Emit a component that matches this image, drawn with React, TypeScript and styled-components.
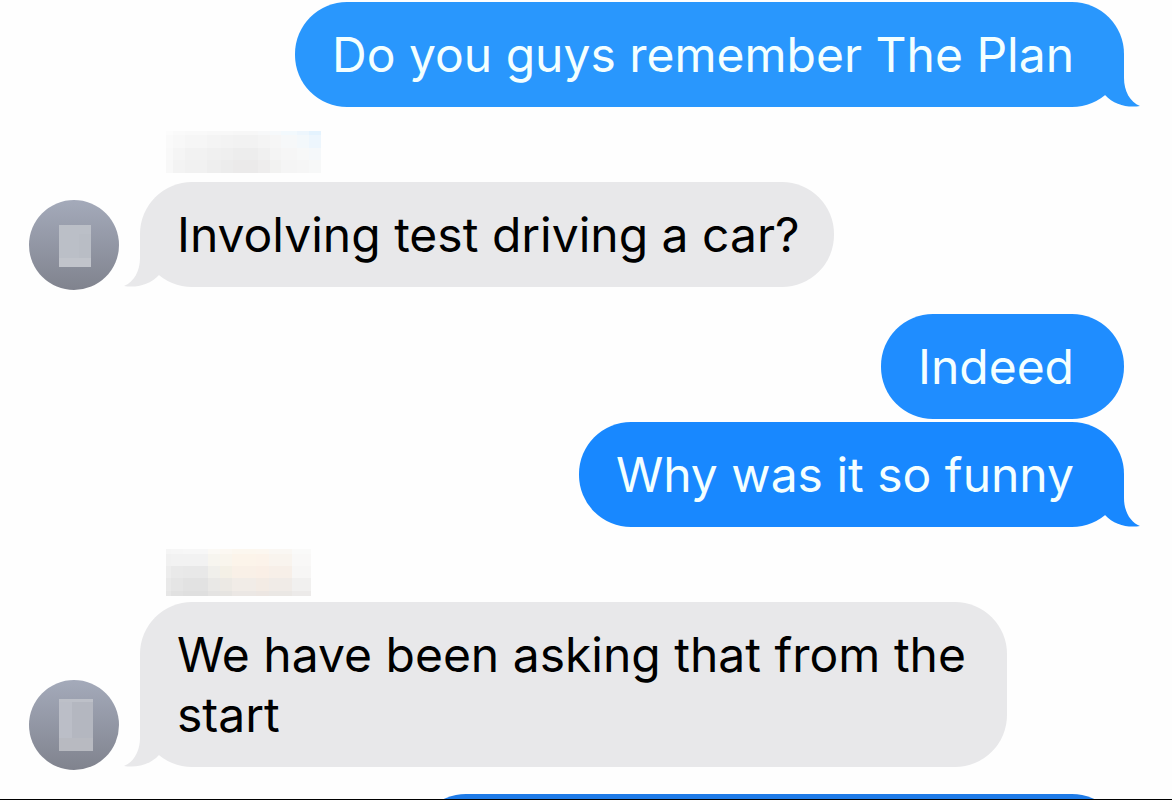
import React from "react";
import styled, { createGlobalStyle } from "styled-components";

const GlobalStyle = createGlobalStyle`
  * { box-sizing: border-box; }
  body { margin: 0; background: #fefefe; }
`;

const Thread = styled.main`
  display: flex;
  flex-direction: column;
  height: 100vh;
  padding-top: 2px;
  overflow: hidden;
  border-bottom: 1px solid #000;
  background: #fefefe;
  font-family: Inter, "Liberation Sans", sans-serif;
  font-size: 48px;
  line-height: 60px;
`;

const SentGroup = styled.section<{ $before?: number }>`
  display: flex;
  flex-direction: column;
  flex-shrink: 0;
  align-items: flex-end;
  gap: 3px;
  margin-top: ${(p) => p.$before ?? 0}px;
  padding: 0 48px;
`;

const ReceivedGroup = styled.section<{ $before: number }>`
  display: flex;
  flex-shrink: 0;
  align-items: flex-end;
  gap: 21px;
  margin-top: ${(p) => p.$before}px;
  padding: 0 165px 0 29px;
`;

const Stack = styled.div<{ $gap: number }>`
  display: flex;
  flex-direction: column;
  align-items: flex-start;
  gap: ${(p) => p.$gap}px;
  padding-bottom: 3px;
`;

const Bubble = styled.div<{ $fill: string; $sent?: boolean }>`
  position: relative;
  min-height: 105px;
  padding: ${(p) => (p.$sent ? "23px 50px 22px 37px" : "23px 34px 22px 37px")};
  border-radius: 52px;
  background: ${(p) => p.$fill};
  color: ${(p) => (p.$sent ? "#f4ffff" : "#000")};
`;

const NextBubble = styled(Bubble)`
  width: 66%;
`;

const Text = styled.p`
  margin: 0;
`;

const TailShape = styled.svg<{ $sent?: boolean }>`
  position: absolute;
  bottom: 0;
  ${(p) => (p.$sent ? "right: -16px;" : "left: -16px; transform: scaleX(-1);")}
`;

const NameBlur = styled.svg`
  display: block;
  margin-left: 26px;
`;

const AvatarDisc = styled.div`
  display: flex;
  flex-shrink: 0;
  align-items: center;
  justify-content: center;
  width: 90px;
  height: 90px;
  border-radius: 50%;
  background: linear-gradient(#a4aaba, #80838e);
`;

function Tail({ fill, sent }: { fill: string; sent?: boolean }) {
  return (
    <TailShape $sent={sent} width="40" height="52" viewBox="0 0 40 52" aria-hidden="true">
      <path d="M24 0V23C24 36 30 47 40 51C28 53 14 50 5 40V0Z" fill={fill} />
    </TailShape>
  );
}

function Mosaic({ rows, cols, heights }: { rows: string[][]; cols: number[]; heights: number[] }) {
  const sum = (list: number[], end: number) => list.slice(0, end).reduce((a, b) => a + b, 0);
  const width = sum(cols, cols.length);
  const height = sum(heights, heights.length);
  return (
    <NameBlur width={width} height={height} shapeRendering="crispEdges" aria-hidden="true">
      {rows.map((row, r) =>
        row.map((fill, c) => (
          <rect key={`${r}-${c}`} x={sum(cols, c)} y={sum(heights, r)} width={cols[c]} height={heights[r]} fill={fill} />
        ))
      )}
    </NameBlur>
  );
}

const firstName = {
  cols: [7, 12, 22, 14, 12, 25, 12, 11, 16, 12, 12],
  heights: [4, 13, 12, 13],
  rows: [
    ["#fcfcfc", "#fafafa", "#f9f9f9", "#f8f8f8", "#f8f8f8", "#f7f7f7", "#f7f8f9", "#f6f9fb", "#f2f9fd", "#edf6fd", "#e4f3fe"],
    ["#fafafa", "#f8f8f8", "#f6f6f6", "#f4f4f4", "#f3f3f3", "#f2f2f2", "#f4f4f4", "#f6f6f6", "#f6f8f9", "#f3f8fb", "#edf6fd"],
    ["#f9f9f9", "#f5f5f5", "#f2f2f2", "#f0f0f0", "#efefef", "#ededed", "#f0f0f0", "#f4f4f4", "#f6f6f6", "#f7f8f8", "#f5f8fa"],
    ["#f8f8f8", "#f3f3f3", "#f1f1f1", "#eeeeee", "#ececec", "#ebeaea", "#eeeded", "#f2f2f1", "#f5f5f5", "#f6f6f6", "#f7f8f8"],
  ],
};

const secondName = {
  cols: [5, 12, 25, 12, 12, 24, 13, 23, 19],
  heights: [5, 12, 12, 13, 5],
  rows: [
    ["#f5f5f5", "#f6f6f6", "#f7f7f7", "#fbf9f5", "#fcf8f2", "#fcf7ef", "#fcf7f0", "#faf7f3", "#fafaf9"],
    ["#f1f1f1", "#f2f2f2", "#f2f2f2", "#f7f5ef", "#f9f5ed", "#fcf4ea", "#fcf3ea", "#f9f4ee", "#f9f8f7"],
    ["#ededed", "#e9e9e9", "#e8e8e8", "#f0efeb", "#f4f0e6", "#f9f0e7", "#faefe6", "#f7efe8", "#f7f6f5"],
    ["#e9e9e9", "#e5e5e5", "#e2e2e2", "#e9e8e6", "#ece9e4", "#f1ece7", "#f3ebe4", "#f0ebe7", "#f1f0ef"],
    ["#e6e6e6", "#e1e1e1", "#dfdfdf", "#e4e3e2", "#e6e4e1", "#ebe7e4", "#ece6e2", "#eae7e4", "#eceae9"],
  ],
};

function ShortAvatar() {
  return (
    <AvatarDisc>
      <svg width="34" height="44" aria-hidden="true">
        <rect x="2" y="2" width="32" height="42" fill="#bbbfc7" />
        <rect x="2" y="35" width="32" height="9" fill="#c1c4cb" />
        <rect x="22" y="11" width="12" height="24" fill="#b9bdc5" />
      </svg>
    </AvatarDisc>
  );
}

function TallAvatar() {
  return (
    <AvatarDisc>
      <svg width="38" height="52" aria-hidden="true">
        <rect x="4" width="34" height="52" fill="#b4b7c0" />
        <rect x="4" width="13" height="52" fill="#bbbec7" />
        <rect x="4" y="39" width="34" height="13" fill="#b8bac1" />
        <rect x="4" width="34" height="3" fill="#bdc0c8" />
      </svg>
    </AvatarDisc>
  );
}

export default function App() {
  return (
    <>
      <GlobalStyle />
      <Thread>
        <SentGroup>
          <Bubble $sent $fill="#2997fd">
            <Tail sent fill="#2997fd" />
            <Text>Do you guys remember The Plan</Text>
          </Bubble>
        </SentGroup>
        <ReceivedGroup $before={24}>
          <ShortAvatar />
          <Stack $gap={9}>
            <Mosaic {...firstName} />
            <Bubble $fill="#e8e8ea">
              <Tail fill="#e8e8ea" />
              <Text>Involving test driving a car?</Text>
            </Bubble>
          </Stack>
        </ReceivedGroup>
        <SentGroup $before={24}>
          <Bubble $sent $fill="#1f8dff">
            <Text>Indeed</Text>
          </Bubble>
          <Bubble $sent $fill="#1888ff">
            <Tail sent fill="#1888ff" />
            <Text>Why was it so funny</Text>
          </Bubble>
        </SentGroup>
        <ReceivedGroup $before={22}>
          <TallAvatar />
          <Stack $gap={6}>
            <Mosaic {...secondName} />
            <Bubble $fill="#e8e8ea">
              <Tail fill="#e8e8ea" />
              <Text>We have been asking that from the start</Text>
            </Bubble>
          </Stack>
        </ReceivedGroup>
        <SentGroup $before={24}>
          <NextBubble $sent $fill="#1e7be8" />
        </SentGroup>
      </Thread>
    </>
  );
}
